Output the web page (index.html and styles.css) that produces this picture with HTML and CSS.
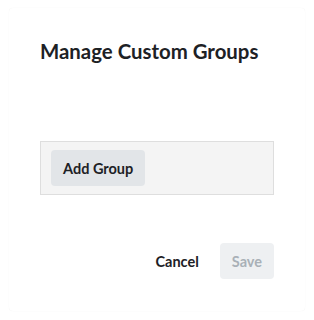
FILE: index.html
```html
<!DOCTYPE html>
<html lang="en">
<head>
    <meta charset="UTF-8">
    <meta name="viewport" content="width=device-width, initial-scale=1.0">
    <title>Manage Custom Groups</title>
    <link rel="stylesheet" href="styles.css">
</head>
<body>
    <div class="modal">
        <h2 class="modal-title">Manage Custom Groups</h2>
        <div class="group-list">
            <button class="button">Add Group</button>
        </div>
        <div class="modal-footer">
            <button class="button plain">Cancel</button>
            <button class="button disabled" disabled>Save</button>
        </div>
    </div>
</body>
</html>
```

FILE: styles.css
```css
* {
    box-sizing: border-box;
}

body {
    margin: 0;
    font-family: Lato, "Liberation Sans", sans-serif;
    color: #1d2125;
    background: #fff;
}

.modal {
    margin: 8px 9px;
    height: 303px;
    padding: 31px 31px 32px;
    border-radius: 4px;
    background: #fff;
    box-shadow: 0 0 1px rgba(0, 0, 0, 0.08);
    display: flex;
    flex-direction: column;
}

.modal-title {
    margin: 0;
    font-size: 20.4px;
    line-height: 24px;
    font-weight: 700;
}

.group-list {
    margin-top: 78px;
    padding: 8px 10px;
    background: #f4f4f4;
    border: 1px solid #dedede;
    display: flex;
}

.modal-footer {
    margin-top: auto;
    display: flex;
    justify-content: flex-end;
    gap: 9px;
}

.button {
    height: 36px;
    padding: 0 12px;
    font-family: inherit;
    font-size: 14.5px;
    font-weight: 700;
    color: #1d2125;
    background: #e2e5e8;
    border: none;
    border-radius: 4px;
}

.button.plain {
    background: transparent;
}

.button.disabled {
    background: #eef0f2;
    color: #a9b0b7;
}
```
